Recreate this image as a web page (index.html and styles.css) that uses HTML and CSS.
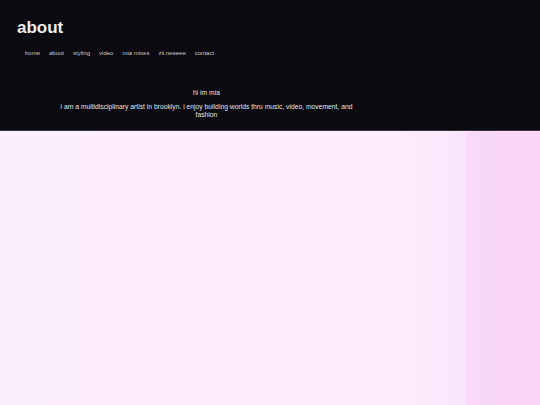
FILE: index.html
```html
<!DOCTYPE html>
<html>
<head>
<meta charset="utf-8">
<link rel="stylesheet" href="styles.css">
</head>
<body>
<header class="top">
  <h1 class="title">about</h1>
  <nav class="nav">
    <a href="#">home</a>
    <a href="#">about</a>
    <a href="#">styling</a>
    <a href="#">video</a>
    <a href="#">mia mixes</a>
    <a href="#">zii.neeeee</a>
    <a href="#">contact</a>
  </nav>
  <div class="intro">
    <p class="hi">hi im mia</p>
    <p class="bio">i am a multidisciplinary artist in brooklyn. i enjoy building worlds thru music, video, movement, and fashion</p>
  </div>
</header>
<main class="canvas"></main>
</body>
</html>
```
FILE: styles.css
```css
html, body {
  margin: 0;
  padding: 0;
  height: 100%;
}
body {
  font-family: "Liberation Sans", Arial, sans-serif;
  background: linear-gradient(90deg, #fdeefd 0, #fdedfd 400px, #fbe4fb 465px, #fad8f8 468px, #f9d5f7 540px);
  display: flex;
  flex-direction: column;
}
.top {
  background: #0b0a10;
  height: 131px;
  border-bottom: 1px solid #3a3640;
  padding: 18px 0 0 0;
  box-sizing: border-box;
}
.title {
  margin: 0 0 0 17px;
  font-size: 17px;
  line-height: 20px;
  font-weight: bold;
  color: #ececec;
}
.nav {
  display: flex;
  gap: 9px;
  margin: 11px 0 0 25px;
}
.nav a {
  font-size: 6px;
  line-height: 8px;
  color: #c8c8cc;
  text-decoration: none;
}
.intro {
  width: 313px;
  margin: 32px 0 0 50px;
  text-align: center;
  color: #e4e4e6;
  font-size: 6.75px;
  line-height: 8px;
}
.hi {
  margin: 0 0 6px 0;
}
.bio {
  margin: 0;
}
.canvas {
  flex: 1;
}
```
